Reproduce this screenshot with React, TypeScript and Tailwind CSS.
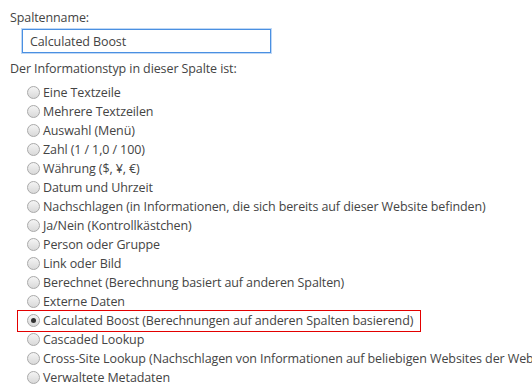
const types = [
  'Eine Textzeile',
  'Mehrere Textzeilen',
  'Auswahl (Menü)',
  'Zahl (1 / 1,0 / 100)',
  'Währung ($, ¥, €)',
  'Datum und Uhrzeit',
  'Nachschlagen (in Informationen, die sich bereits auf dieser Website befinden)',
  'Ja/Nein (Kontrollkästchen)',
  'Person oder Gruppe',
  'Link oder Bild',
  'Berechnet (Berechnung basiert auf anderen Spalten)',
  'Externe Daten',
  'Calculated Boost (Berechnungen auf anderen Spalten basierend)',
  'Cascaded Lookup',
  'Cross-Site Lookup (Nachschlagen von Informationen auf beliebigen Websites der Websitesammlung)',
  'Verwaltete Metadaten',
];

const SELECTED = 12;

function Radio({ checked }: { checked?: boolean }) {
  return (
    <span className="w-[13px] h-[13px] rounded-full border border-[#a9a9a9] bg-gradient-to-b from-[#f4f4f4] to-[#d9d9d9] flex items-center justify-center shrink-0">
      {checked && <span className="w-[5px] h-[5px] rounded-full bg-[#333]" />}
    </span>
  );
}

export default function App() {
  return (
    <div
      className="w-[532px] h-[388px] overflow-hidden bg-white text-[#444] text-[12.5px] tracking-[-0.1px] leading-[19px] pt-[8px] pl-[10px] whitespace-nowrap"
      style={{ fontFamily: '"Open Sans", "Segoe UI", sans-serif' }}
    >
      <p>Spaltenname:</p>
      <input
        readOnly
        value="Calculated Boost"
        className="mt-[2px] ml-[12px] w-[249px] h-[24px] border border-[#4a90e2] shadow-[0_0_0_1px_rgba(74,144,226,0.35)] px-[7px] text-[#444] outline-none"
      />
      <p className="mt-[6px]">Der Informationstyp in dieser Spalte ist:</p>
      <ul className="mt-[5px]">
        {types.map((t, i) =>
          i === SELECTED ? (
            <li key={i} className="h-[19px] flex items-center">
              <span className="inline-flex items-center gap-[3px] h-[22px] ml-[7px] pl-[9px] pr-[7px] border border-[#e30000]">
                <Radio checked />
                <span>{t}</span>
              </span>
            </li>
          ) : (
            <li key={i} className="h-[19px] flex items-center gap-[3px] pl-[17px]">
              <Radio />
              <span>{t}</span>
            </li>
          )
        )}
      </ul>
    </div>
  );
}
